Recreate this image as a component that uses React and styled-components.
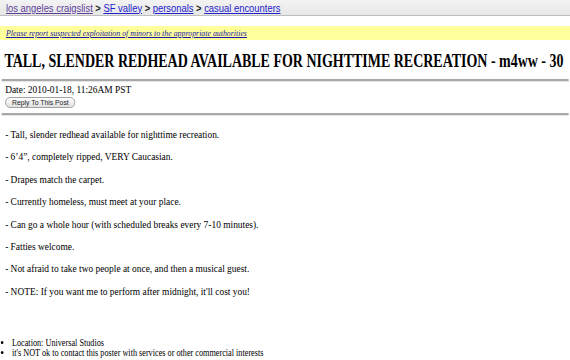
import React from "react";
import styled, { createGlobalStyle } from "styled-components";

const Global = createGlobalStyle`
  html, body { margin: 0; padding: 0; background: #fff; }
  body { font-family: "Liberation Serif", "Times New Roman", serif; color: #000; }
`;

const Viewport = styled.div`
  width: 570px;
  height: 360px;
  overflow: hidden;
`;

/* the captured page is horizontally condensed, as in the reference */
const Page = styled.div`
  width: 667px;
  height: 360px;
  transform: scaleX(0.855);
  transform-origin: 0 0;
  display: flex;
  flex-direction: column;
`;

const Crumbs = styled.div`
  height: 15px;
  background: linear-gradient(#f3f3f3, #e7e7e7);
  border-bottom: 1px solid #bdbdbd;
  padding: 0 7px;
  display: flex;
  align-items: center;
  font-family: "Liberation Sans", Arial, sans-serif;
  font-size: 11px;
  white-space: nowrap;
`;

const Crumb = styled.a`
  color: ${(p) => (p.$visited ? "#5b3f98" : "#2222cc")};
  text-decoration: underline;
`;

const Sep = styled.span`
  font-weight: bold;
  margin: 0 3px;
  color: #222;
`;

const Warning = styled.div`
  margin-top: 10px;
  height: 14px;
  background: #ffff9c;
  padding: 0 7px;
  display: flex;
  align-items: center;
  font-size: 9.2px;
  font-style: italic;
  white-space: nowrap;
  a { color: #1a1aa8; text-decoration: underline; }
`;

const Title = styled.h2`
  margin: 10px 0 0;
  padding: 0 6px;
  font-size: 19px;
  font-weight: bold;
  line-height: 22px;
  white-space: nowrap;
  transform: scaleX(0.86);
  transform-origin: 0 50%;
`;

const Rule = styled.hr`
  margin: ${(p) => p.$top}px 2px 0;
  border: none;
  height: 2px;
  background: #a8a8a8;
  box-shadow: 0 1px 0 #e4e4e4;
`;

const DateLine = styled.div`
  margin-top: 2px;
  padding: 0 6px;
  font-size: 11px;
  line-height: 12px;
`;

const ReplyButton = styled.button`
  margin: 2px 0 0 6px;
  align-self: flex-start;
  height: 11px;
  padding: 0 7px;
  border: 1px solid #9a9a9a;
  border-radius: 6px;
  background: linear-gradient(#ffffff, #e0e0e0);
  font-family: "Liberation Sans", Arial, sans-serif;
  font-size: 8px;
  line-height: 9px;
  color: #222;
`;

const Body = styled.div`
  margin-top: 13px;
  padding: 0 6px;
  display: flex;
  flex-direction: column;
  gap: 9.4px;
  font-size: 11px;
  line-height: 13px;
`;

const Footer = styled.ul`
  margin: auto 0 2px;
  padding: 0 0 0 14px;
  font-size: 9.6px;
  line-height: 10px;
`;

const lines = [
  "- Tall, slender redhead available for nighttime recreation.",
  "- 6\u20194\u201D, completely ripped, VERY Caucasian.",
  "- Drapes match the carpet.",
  "- Currently homeless, must meet at your place.",
  "- Can go a whole hour (with scheduled breaks every 7-10 minutes).",
  "- Fatties welcome.",
  "- Not afraid to take two people at once, and then a musical guest.",
  "- NOTE: If you want me to perform after midnight, it'll cost you!",
];

export default function App() {
  return (
    <Viewport>
      <Global />
      <Page>
        <Crumbs>
          <Crumb $visited href="#">los angeles craigslist</Crumb>
          <Sep>&gt;</Sep>
          <Crumb href="#">SF valley</Crumb>
          <Sep>&gt;</Sep>
          <Crumb href="#">personals</Crumb>
          <Sep>&gt;</Sep>
          <Crumb href="#">casual encounters</Crumb>
        </Crumbs>
        <Warning>
          <a href="#">Please report suspected exploitation of minors to the appropriate authorities</a>
        </Warning>
        <Title>TALL, SLENDER REDHEAD AVAILABLE FOR NIGHTTIME RECREATION - m4ww - 30</Title>
        <Rule $top={7} />
        <DateLine>Date: 2010-01-18, 11:26AM PST</DateLine>
        <ReplyButton>Reply To This Post</ReplyButton>
        <Rule $top={5} />
        <Body>
          {lines.map((l) => (
            <div key={l}>{l}</div>
          ))}
        </Body>
        <Footer>
          <li>Location: Universal Studios</li>
          <li>it's NOT ok to contact this poster with services or other commercial interests</li>
        </Footer>
      </Page>
    </Viewport>
  );
}
